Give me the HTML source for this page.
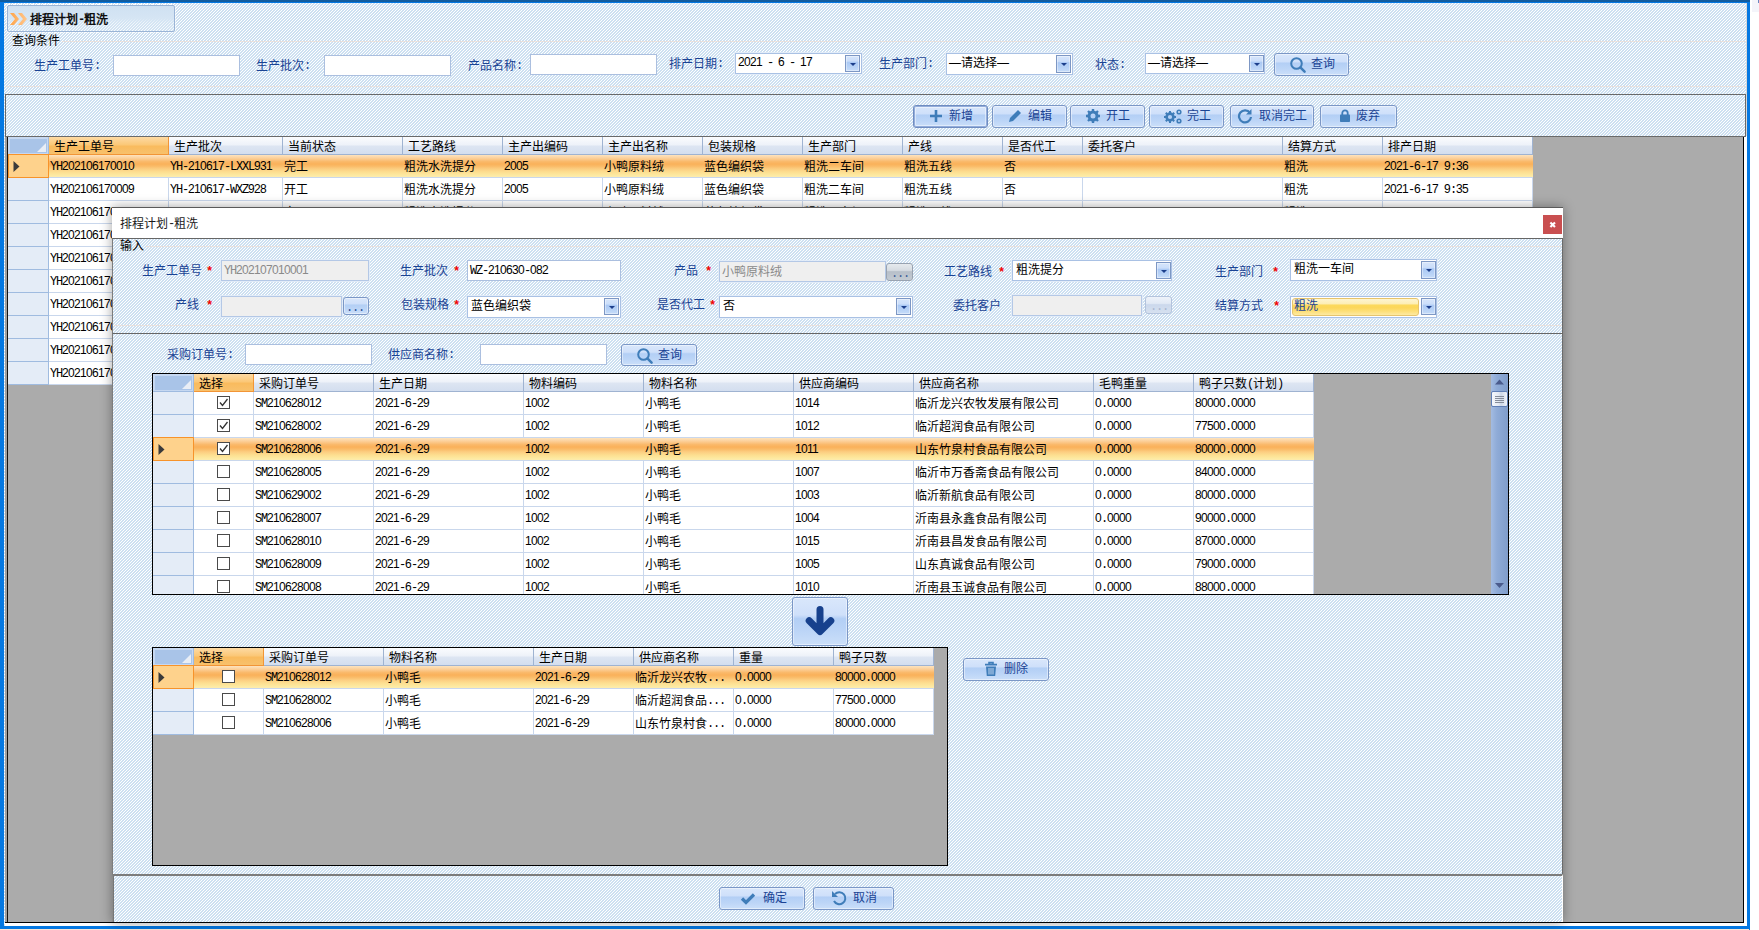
<!DOCTYPE html>
<html lang="zh-CN"><head><meta charset="utf-8"><title>排程计划-粗洗</title><style>
*{box-sizing:border-box;margin:0;padding:0}
html,body{width:1759px;height:930px;overflow:hidden;background:#fff}
body{font-family:"Liberation Sans",sans-serif;font-size:12px;line-height:14px;color:#000;position:relative}
.a{position:absolute}
.t{white-space:nowrap;height:15px;line-height:14px;padding-top:1px}
i.m{font-family:"Liberation Mono",monospace;font-style:normal;letter-spacing:-1.2px;position:relative;top:-1px}
i.d{font-family:"Liberation Sans",sans-serif;font-style:normal;letter-spacing:-.674px;position:relative;top:-1px}
.hatch{background:repeating-linear-gradient(135deg,#fff 0 0.3536px,#cde0f1 0.3536px 1.7678px,#fff 1.7678px 2.1213px)}
.lb{color:#1a4394}
.red{color:#f00000}
.inp{background:#fff;border:1px solid #abbfdf}
.cmb{background:#fff;border:1px solid #a9c1e4;box-shadow:0 0 0 1px rgba(226,236,248,.9)}
.dis{background:#efefef;border:1px solid #b4c8e6;box-shadow:0 0 0 1px rgba(226,236,248,.9)}
.btn{border:1px solid #7b97c6;border-radius:3px;background:linear-gradient(#d9e7fb 0,#cfe0fa 36%,#b3cff5 44%,#bcd5f7 70%,#cbdff9 100%);box-shadow:inset 0 0 0 1px rgba(255,255,255,.45)}
.dd{border:1px solid #7d97c4;background:linear-gradient(#d6e5fb 0,#cbdefa 34%,#abc9f4 42%,#b6d1f6 70%,#c6dcf9 100%);box-shadow:inset 0 0 0 1px rgba(255,255,255,.4)}
.dd:after{content:"";position:absolute;left:50%;top:50%;margin:-1px 0 0 -3px;border:3px solid transparent;border-top:3px solid #1c3f8c;border-bottom:0}
.hd{background:linear-gradient(#fbfcfe 0,#eef2f9 45%,#dde5f2 55%,#d3deef 100%);border-right:1px solid #9fb3d1;border-bottom:1px solid #9fb3d1}
.hdo{background:linear-gradient(#fddaa4 0,#fbc878 45%,#f9bb5e 55%,#f8c16c 100%);border-right:1px solid #f29536;border-bottom:1px solid #f29536}
.ind{background:#e4ecf7;border-right:1px solid #9fbbe0;border-bottom:1px solid #9fbbe0}
.indh{background:#a9c4e8;box-shadow:inset 2px 2px 0 #c6d8f1,inset -1px -1px 0 #c6d8f1;border-right:1px solid #9fbbe0;border-bottom:1px solid #9fbbe0}
.cell{background:#fff;border-right:1px solid #c9d7ec;border-bottom:1px solid #c9d7ec}
.sel{background:linear-gradient(#fde3be 0,#fcd09a 14%,#fab96a 30%,#fab15a 41%,#fabb68 51%,#fccd80 63%,#fdde90 77%,#fde89e 90%,#fdecae 100%)}
.indsel{background:#fed28c;border:1px solid #f7932a}
.cb{background:#fff;border:1px solid #4a4a4a;width:13px;height:13px}
</style></head><body>
<div class="a " style="left:0px;top:0px;width:1750px;height:930px;background:#0478e2"></div>
<div class="a " style="left:0px;top:0px;width:1750px;height:2px;background:#115c9f"></div>
<div class="a " style="left:0px;top:929px;width:1749px;height:1px;background:#fbe6d6"></div>
<div class="a " style="left:1752px;top:0px;width:7px;height:12px;background:#f4f4fa"></div>
<div class="a " style="left:1758px;top:0px;width:1px;height:3px;background:#6a86c0"></div>
<div class="a hatch" style="left:4px;top:3px;width:1743px;height:923px;"></div>
<div class="a " style="left:7px;top:5px;width:168px;height:27px;outline:1px dotted #fff;outline-offset:0;border:1px solid #9ab4d6;border-radius:2px;background:linear-gradient(#cfe1f2 0,#d5e5f4 48%,rgba(222,235,246,.45) 68%,rgba(228,239,248,.2) 100%)"></div>
<svg class="a" style="left:9px;top:12px" width="20" height="14" viewBox="0 0 20 14"><defs><linearGradient id="og" x1="0" y1="0" x2="1" y2="0"><stop offset="0" stop-color="#ffa54a"/><stop offset="1" stop-color="#ffc68c"/></linearGradient></defs><path d="M1 1h4l5 6-5 6h-4l5-6z M9 1h4l5 6-5 6h-4l5-6z" fill="url(#og)"/></svg>
<div class="a t " style="left:30px;top:12px;font-weight:bold;color:#101010">排程计划<i class="m">-</i>粗洗</div>
<div class="a t " style="left:12px;top:33px;">查询条件</div>
<div class="a " style="left:62px;top:41px;width:1684px;height:1px;background:repeating-linear-gradient(90deg,#e9dcd5 0 1px,rgba(238,228,223,.7) 1px 2px)"></div>
<div class="a " style="left:6px;top:86px;width:1740px;height:1px;background:repeating-linear-gradient(90deg,#e9dcd5 0 1px,rgba(238,228,223,.7) 1px 2px)"></div>
<div class="a t lb" style="left:34px;top:58px;">生产工单号<i class="m">:</i></div>
<div class="a inp" style="left:113px;top:55px;width:127px;height:21px;"></div>
<div class="a t lb" style="left:256px;top:58px;">生产批次<i class="m">:</i></div>
<div class="a inp" style="left:324px;top:55px;width:127px;height:21px;"></div>
<div class="a t lb" style="left:468px;top:58px;">产品名称<i class="m">:</i></div>
<div class="a inp" style="left:530px;top:54px;width:127px;height:21px;"></div>
<div class="a t lb" style="left:669px;top:56px;">排产日期<i class="m">:</i></div>
<div class="a cmb" style="left:735px;top:53px;width:127px;height:21px;"></div>
<div class="a t " style="left:738px;top:55px;word-spacing:-1px"><i class="d">2021</i><i class="m"> - </i><i class="d">6</i><i class="m"> - </i><i class="d">17</i></div>
<div class="a dd" style="left:845px;top:55px;width:15px;height:17px;"></div>
<div class="a t lb" style="left:879px;top:56px;">生产部门<i class="m">:</i></div>
<div class="a cmb" style="left:946px;top:53px;width:127px;height:22px;"></div>
<div class="a t " style="left:949px;top:55px;">—请选择—</div>
<div class="a dd" style="left:1056px;top:55px;width:15px;height:18px;"></div>
<div class="a t lb" style="left:1095px;top:57px;">状态<i class="m">:</i></div>
<div class="a cmb" style="left:1145px;top:53px;width:120px;height:21px;"></div>
<div class="a t " style="left:1148px;top:55px;">—请选择—</div>
<div class="a dd" style="left:1249px;top:55px;width:15px;height:17px;"></div>
<div class="a btn" style="left:1274px;top:53px;width:75px;height:23px;"></div>
<svg class="a" style="left:1289px;top:56px" width="18" height="18" viewBox="0 0 18 18"><circle cx="7.5" cy="7.5" r="5.3" fill="none" stroke="#3f7db9" stroke-width="2"/><path d="M11.6 11.6l4 4" stroke="#3f7db9" stroke-width="2.5" stroke-linecap="round"/></svg>
<div class="a t lb" style="left:1311px;top:56px;">查询</div>
<div class="a " style="left:5px;top:94px;width:1741px;height:43px;border:1px solid #696969"></div>
<div class="a " style="left:1746px;top:3px;width:1px;height:134px;background:#d6d8da"></div>
<div class="a btn" style="left:913px;top:105px;width:75px;height:23px;box-shadow:inset 0 0 0 1px #93addb,inset 0 0 0 2px rgba(255,255,255,.45);border-color:#6f8cc0"></div>
<svg class="a" style="left:929px;top:109px" width="14" height="14" viewBox="0 0 14 14"><path d="M7 1v12M1 7h12" stroke="#3f7db9" stroke-width="2.6"/></svg>
<div class="a t lb" style="left:949px;top:108px;">新增</div>
<div class="a btn" style="left:992px;top:105px;width:75px;height:23px;"></div>
<svg class="a" style="left:1007px;top:108px" width="16" height="16" viewBox="0 0 16 16"><path d="M2 14l1-4 8-8 3 3-8 8z" fill="#3f7db9"/></svg>
<div class="a t lb" style="left:1028px;top:108px;">编辑</div>
<div class="a btn" style="left:1070px;top:105px;width:75px;height:23px;"></div>
<svg class="a" style="left:1085px;top:108px" width="16" height="16" viewBox="0 0 16 16"><circle cx="8" cy="8" r="4" fill="none" stroke="#3f7db9" stroke-width="3"/><g stroke="#3f7db9" stroke-width="2.4"><path d="M8 1v3M8 12v3M1 8h3M12 8h3M3 3l2 2M11 11l2 2M13 3l-2 2M5 11l-2 2"/></g></svg>
<div class="a t lb" style="left:1106px;top:108px;">开工</div>
<div class="a btn" style="left:1149px;top:105px;width:75px;height:23px;"></div>
<svg class="a" style="left:1163px;top:108px" width="20" height="16" viewBox="0 0 20 16"><circle cx="7" cy="9" r="3.4" fill="none" stroke="#3f7db9" stroke-width="2.6"/><g stroke="#3f7db9" stroke-width="2"><path d="M7 3v2M7 13v2M1 9h2M11 9h2M2.8 4.8l1.4 1.4M9.8 11.8l1.4 1.4M11.2 4.8l-1.4 1.4M4.2 11.8l-1.4 1.4"/></g><circle cx="16" cy="4" r="1.8" fill="none" stroke="#3f7db9" stroke-width="1.6"/><circle cx="16" cy="13" r="1.8" fill="none" stroke="#3f7db9" stroke-width="1.6"/></svg>
<div class="a t lb" style="left:1187px;top:108px;">完工</div>
<div class="a btn" style="left:1230px;top:105px;width:84px;height:23px;"></div>
<svg class="a" style="left:1237px;top:108px" width="16" height="16" viewBox="0 0 16 16"><path d="M13 5A6 6 0 1 0 14 9" fill="none" stroke="#3f7db9" stroke-width="2.2"/><path d="M14.5 1v5.5h-5.5z" fill="#3f7db9"/></svg>
<div class="a t lb" style="left:1259px;top:108px;">取消完工</div>
<div class="a btn" style="left:1320px;top:105px;width:77px;height:23px;"></div>
<svg class="a" style="left:1338px;top:108px" width="14" height="16" viewBox="0 0 14 16"><rect x="2" y="6.5" width="10" height="7.5" rx=".8" fill="#3f7db9"/><path d="M4.3 7V5a2.7 2.7 0 0 1 5.4 0v2" fill="none" stroke="#3f7db9" stroke-width="1.8"/></svg>
<div class="a t lb" style="left:1356px;top:108px;">废弃</div>
<div class="a " style="left:5px;top:136px;width:1742px;height:790px;background:#fff"></div>
<div class="a " style="left:5px;top:136px;width:1739px;height:787px;background:#000"></div>
<div class="a " style="left:5px;top:136px;width:1738px;height:786px;background:#ababab"></div>
<div class="a " style="left:5px;top:136px;width:1741px;height:1px;background:#696969"></div>
<div class="a " style="left:5px;top:137px;width:2px;height:785px;background:#a0a0a0"></div>
<div class="a " style="left:7px;top:137px;width:1px;height:785px;background:#141414"></div>
<div class="a indh" style="left:8px;top:137px;width:41px;height:18px;"><svg class="a" style="right:2px;bottom:2px" width="9" height="9"><path d="M9 0v9h-9z" fill="#e9eef6"/></svg></div>
<div class="a hdo" style="left:49px;top:137px;width:120px;height:18px;"></div>
<div class="a t " style="left:54px;top:139px;">生产工单号</div>
<div class="a hd" style="left:169px;top:137px;width:114px;height:18px;"></div>
<div class="a t " style="left:174px;top:139px;">生产批次</div>
<div class="a hd" style="left:283px;top:137px;width:120px;height:18px;"></div>
<div class="a t " style="left:288px;top:139px;">当前状态</div>
<div class="a hd" style="left:403px;top:137px;width:100px;height:18px;"></div>
<div class="a t " style="left:408px;top:139px;">工艺路线</div>
<div class="a hd" style="left:503px;top:137px;width:100px;height:18px;"></div>
<div class="a t " style="left:508px;top:139px;">主产出编码</div>
<div class="a hd" style="left:603px;top:137px;width:100px;height:18px;"></div>
<div class="a t " style="left:608px;top:139px;">主产出名称</div>
<div class="a hd" style="left:703px;top:137px;width:100px;height:18px;"></div>
<div class="a t " style="left:708px;top:139px;">包装规格</div>
<div class="a hd" style="left:803px;top:137px;width:100px;height:18px;"></div>
<div class="a t " style="left:808px;top:139px;">生产部门</div>
<div class="a hd" style="left:903px;top:137px;width:100px;height:18px;"></div>
<div class="a t " style="left:908px;top:139px;">产线</div>
<div class="a hd" style="left:1003px;top:137px;width:80px;height:18px;"></div>
<div class="a t " style="left:1008px;top:139px;">是否代工</div>
<div class="a hd" style="left:1083px;top:137px;width:200px;height:18px;"></div>
<div class="a t " style="left:1088px;top:139px;">委托客户</div>
<div class="a hd" style="left:1283px;top:137px;width:100px;height:18px;"></div>
<div class="a t " style="left:1288px;top:139px;">结算方式</div>
<div class="a hd" style="left:1383px;top:137px;width:150px;height:18px;"></div>
<div class="a t " style="left:1388px;top:139px;">排产日期</div>
<div class="a indsel" style="left:8px;top:154px;width:41px;height:24px;"><svg class="a" style="left:4px;top:6px" width="7" height="11"><path d="M0.5 0l6 5.5-6 5.5z" fill="#3a3a3a"/></svg></div>
<div class="a sel" style="left:49px;top:155px;width:1484px;height:23px;border-bottom:1px solid #c9d7ec"></div>
<div class="a t " style="left:50px;top:159px;"><i class="m">YH</i><i class="d">202106170010</i></div>
<div class="a t " style="left:170px;top:159px;"><i class="m">YH-</i><i class="d">210617</i><i class="m">-LXXL</i><i class="d">931</i></div>
<div class="a t " style="left:284px;top:159px;">完工</div>
<div class="a t " style="left:404px;top:159px;">粗洗水洗提分</div>
<div class="a t " style="left:504px;top:159px;"><i class="d">2005</i></div>
<div class="a t " style="left:604px;top:159px;">小鸭原料绒</div>
<div class="a t " style="left:704px;top:159px;">蓝色编织袋</div>
<div class="a t " style="left:804px;top:159px;">粗洗二车间</div>
<div class="a t " style="left:904px;top:159px;">粗洗五线</div>
<div class="a t " style="left:1004px;top:159px;">否</div>
<div class="a t " style="left:1284px;top:159px;">粗洗</div>
<div class="a t " style="left:1384px;top:159px;"><i class="d">2021</i><i class="m">-</i><i class="d">6</i><i class="m">-</i><i class="d">17</i><i class="m"> </i><i class="d">9</i><i class="m">:</i><i class="d">36</i></div>
<div class="a ind" style="left:8px;top:178px;width:41px;height:23px;"></div>
<div class="a cell" style="left:49px;top:178px;width:120px;height:23px;"></div>
<div class="a t " style="left:50px;top:182px;"><i class="m">YH</i><i class="d">202106170009</i></div>
<div class="a cell" style="left:169px;top:178px;width:114px;height:23px;"></div>
<div class="a t " style="left:170px;top:182px;"><i class="m">YH-</i><i class="d">210617</i><i class="m">-WXZ</i><i class="d">928</i></div>
<div class="a cell" style="left:283px;top:178px;width:120px;height:23px;"></div>
<div class="a t " style="left:284px;top:182px;">开工</div>
<div class="a cell" style="left:403px;top:178px;width:100px;height:23px;"></div>
<div class="a t " style="left:404px;top:182px;">粗洗水洗提分</div>
<div class="a cell" style="left:503px;top:178px;width:100px;height:23px;"></div>
<div class="a t " style="left:504px;top:182px;"><i class="d">2005</i></div>
<div class="a cell" style="left:603px;top:178px;width:100px;height:23px;"></div>
<div class="a t " style="left:604px;top:182px;">小鸭原料绒</div>
<div class="a cell" style="left:703px;top:178px;width:100px;height:23px;"></div>
<div class="a t " style="left:704px;top:182px;">蓝色编织袋</div>
<div class="a cell" style="left:803px;top:178px;width:100px;height:23px;"></div>
<div class="a t " style="left:804px;top:182px;">粗洗二车间</div>
<div class="a cell" style="left:903px;top:178px;width:100px;height:23px;"></div>
<div class="a t " style="left:904px;top:182px;">粗洗五线</div>
<div class="a cell" style="left:1003px;top:178px;width:80px;height:23px;"></div>
<div class="a t " style="left:1004px;top:182px;">否</div>
<div class="a cell" style="left:1083px;top:178px;width:200px;height:23px;"></div>
<div class="a cell" style="left:1283px;top:178px;width:100px;height:23px;"></div>
<div class="a t " style="left:1284px;top:182px;">粗洗</div>
<div class="a cell" style="left:1383px;top:178px;width:150px;height:23px;"></div>
<div class="a t " style="left:1384px;top:182px;"><i class="d">2021</i><i class="m">-</i><i class="d">6</i><i class="m">-</i><i class="d">17</i><i class="m"> </i><i class="d">9</i><i class="m">:</i><i class="d">35</i></div>
<div class="a ind" style="left:8px;top:201px;width:41px;height:23px;"></div>
<div class="a cell" style="left:49px;top:201px;width:120px;height:23px;"></div>
<div class="a t " style="left:50px;top:205px;"><i class="m">YH</i><i class="d">202106170008</i></div>
<div class="a cell" style="left:169px;top:201px;width:114px;height:23px;"></div>
<div class="a t " style="left:170px;top:205px;"><i class="m">YH-</i><i class="d">210617</i><i class="m">-WXZ</i><i class="d">927</i></div>
<div class="a cell" style="left:283px;top:201px;width:120px;height:23px;"></div>
<div class="a t " style="left:284px;top:205px;">完工</div>
<div class="a cell" style="left:403px;top:201px;width:100px;height:23px;"></div>
<div class="a t " style="left:404px;top:205px;">粗洗水洗提分</div>
<div class="a cell" style="left:503px;top:201px;width:100px;height:23px;"></div>
<div class="a t " style="left:504px;top:205px;"><i class="d">2005</i></div>
<div class="a cell" style="left:603px;top:201px;width:100px;height:23px;"></div>
<div class="a t " style="left:604px;top:205px;">小鸭原料绒</div>
<div class="a cell" style="left:703px;top:201px;width:100px;height:23px;"></div>
<div class="a t " style="left:704px;top:205px;">蓝色编织袋</div>
<div class="a cell" style="left:803px;top:201px;width:100px;height:23px;"></div>
<div class="a t " style="left:804px;top:205px;">粗洗二车间</div>
<div class="a cell" style="left:903px;top:201px;width:100px;height:23px;"></div>
<div class="a t " style="left:904px;top:205px;">粗洗五线</div>
<div class="a cell" style="left:1003px;top:201px;width:80px;height:23px;"></div>
<div class="a t " style="left:1004px;top:205px;">否</div>
<div class="a cell" style="left:1083px;top:201px;width:200px;height:23px;"></div>
<div class="a cell" style="left:1283px;top:201px;width:100px;height:23px;"></div>
<div class="a t " style="left:1284px;top:205px;">粗洗</div>
<div class="a cell" style="left:1383px;top:201px;width:150px;height:23px;"></div>
<div class="a t " style="left:1384px;top:205px;"><i class="d">2021</i><i class="m">-</i><i class="d">6</i><i class="m">-</i><i class="d">17</i><i class="m"> </i><i class="d">9</i><i class="m">:</i><i class="d">30</i></div>
<div class="a ind" style="left:8px;top:224px;width:41px;height:23px;"></div>
<div class="a cell" style="left:49px;top:224px;width:120px;height:23px;"></div>
<div class="a t " style="left:50px;top:228px;"><i class="m">YH</i><i class="d">202106170007</i></div>
<div class="a cell" style="left:169px;top:224px;width:114px;height:23px;"></div>
<div class="a t " style="left:170px;top:228px;"><i class="m">YH-</i><i class="d">210617</i><i class="m">-WXZ</i><i class="d">926</i></div>
<div class="a cell" style="left:283px;top:224px;width:120px;height:23px;"></div>
<div class="a t " style="left:284px;top:228px;">完工</div>
<div class="a cell" style="left:403px;top:224px;width:100px;height:23px;"></div>
<div class="a t " style="left:404px;top:228px;">粗洗水洗提分</div>
<div class="a cell" style="left:503px;top:224px;width:100px;height:23px;"></div>
<div class="a t " style="left:504px;top:228px;"><i class="d">2005</i></div>
<div class="a cell" style="left:603px;top:224px;width:100px;height:23px;"></div>
<div class="a t " style="left:604px;top:228px;">小鸭原料绒</div>
<div class="a cell" style="left:703px;top:224px;width:100px;height:23px;"></div>
<div class="a t " style="left:704px;top:228px;">蓝色编织袋</div>
<div class="a cell" style="left:803px;top:224px;width:100px;height:23px;"></div>
<div class="a t " style="left:804px;top:228px;">粗洗二车间</div>
<div class="a cell" style="left:903px;top:224px;width:100px;height:23px;"></div>
<div class="a t " style="left:904px;top:228px;">粗洗五线</div>
<div class="a cell" style="left:1003px;top:224px;width:80px;height:23px;"></div>
<div class="a t " style="left:1004px;top:228px;">否</div>
<div class="a cell" style="left:1083px;top:224px;width:200px;height:23px;"></div>
<div class="a cell" style="left:1283px;top:224px;width:100px;height:23px;"></div>
<div class="a t " style="left:1284px;top:228px;">粗洗</div>
<div class="a cell" style="left:1383px;top:224px;width:150px;height:23px;"></div>
<div class="a t " style="left:1384px;top:228px;"><i class="d">2021</i><i class="m">-</i><i class="d">6</i><i class="m">-</i><i class="d">17</i><i class="m"> </i><i class="d">9</i><i class="m">:</i><i class="d">28</i></div>
<div class="a ind" style="left:8px;top:247px;width:41px;height:23px;"></div>
<div class="a cell" style="left:49px;top:247px;width:120px;height:23px;"></div>
<div class="a t " style="left:50px;top:251px;"><i class="m">YH</i><i class="d">202106170006</i></div>
<div class="a cell" style="left:169px;top:247px;width:114px;height:23px;"></div>
<div class="a t " style="left:170px;top:251px;"><i class="m">YH-</i><i class="d">210617</i><i class="m">-WXZ</i><i class="d">925</i></div>
<div class="a cell" style="left:283px;top:247px;width:120px;height:23px;"></div>
<div class="a t " style="left:284px;top:251px;">完工</div>
<div class="a cell" style="left:403px;top:247px;width:100px;height:23px;"></div>
<div class="a t " style="left:404px;top:251px;">粗洗水洗提分</div>
<div class="a cell" style="left:503px;top:247px;width:100px;height:23px;"></div>
<div class="a t " style="left:504px;top:251px;"><i class="d">2005</i></div>
<div class="a cell" style="left:603px;top:247px;width:100px;height:23px;"></div>
<div class="a t " style="left:604px;top:251px;">小鸭原料绒</div>
<div class="a cell" style="left:703px;top:247px;width:100px;height:23px;"></div>
<div class="a t " style="left:704px;top:251px;">蓝色编织袋</div>
<div class="a cell" style="left:803px;top:247px;width:100px;height:23px;"></div>
<div class="a t " style="left:804px;top:251px;">粗洗二车间</div>
<div class="a cell" style="left:903px;top:247px;width:100px;height:23px;"></div>
<div class="a t " style="left:904px;top:251px;">粗洗五线</div>
<div class="a cell" style="left:1003px;top:247px;width:80px;height:23px;"></div>
<div class="a t " style="left:1004px;top:251px;">否</div>
<div class="a cell" style="left:1083px;top:247px;width:200px;height:23px;"></div>
<div class="a cell" style="left:1283px;top:247px;width:100px;height:23px;"></div>
<div class="a t " style="left:1284px;top:251px;">粗洗</div>
<div class="a cell" style="left:1383px;top:247px;width:150px;height:23px;"></div>
<div class="a t " style="left:1384px;top:251px;"><i class="d">2021</i><i class="m">-</i><i class="d">6</i><i class="m">-</i><i class="d">17</i><i class="m"> </i><i class="d">9</i><i class="m">:</i><i class="d">25</i></div>
<div class="a ind" style="left:8px;top:270px;width:41px;height:23px;"></div>
<div class="a cell" style="left:49px;top:270px;width:120px;height:23px;"></div>
<div class="a t " style="left:50px;top:274px;"><i class="m">YH</i><i class="d">202106170005</i></div>
<div class="a cell" style="left:169px;top:270px;width:114px;height:23px;"></div>
<div class="a t " style="left:170px;top:274px;"><i class="m">YH-</i><i class="d">210617</i><i class="m">-WXZ</i><i class="d">924</i></div>
<div class="a cell" style="left:283px;top:270px;width:120px;height:23px;"></div>
<div class="a t " style="left:284px;top:274px;">完工</div>
<div class="a cell" style="left:403px;top:270px;width:100px;height:23px;"></div>
<div class="a t " style="left:404px;top:274px;">粗洗水洗提分</div>
<div class="a cell" style="left:503px;top:270px;width:100px;height:23px;"></div>
<div class="a t " style="left:504px;top:274px;"><i class="d">2005</i></div>
<div class="a cell" style="left:603px;top:270px;width:100px;height:23px;"></div>
<div class="a t " style="left:604px;top:274px;">小鸭原料绒</div>
<div class="a cell" style="left:703px;top:270px;width:100px;height:23px;"></div>
<div class="a t " style="left:704px;top:274px;">蓝色编织袋</div>
<div class="a cell" style="left:803px;top:270px;width:100px;height:23px;"></div>
<div class="a t " style="left:804px;top:274px;">粗洗二车间</div>
<div class="a cell" style="left:903px;top:270px;width:100px;height:23px;"></div>
<div class="a t " style="left:904px;top:274px;">粗洗五线</div>
<div class="a cell" style="left:1003px;top:270px;width:80px;height:23px;"></div>
<div class="a t " style="left:1004px;top:274px;">否</div>
<div class="a cell" style="left:1083px;top:270px;width:200px;height:23px;"></div>
<div class="a cell" style="left:1283px;top:270px;width:100px;height:23px;"></div>
<div class="a t " style="left:1284px;top:274px;">粗洗</div>
<div class="a cell" style="left:1383px;top:270px;width:150px;height:23px;"></div>
<div class="a t " style="left:1384px;top:274px;"><i class="d">2021</i><i class="m">-</i><i class="d">6</i><i class="m">-</i><i class="d">17</i><i class="m"> </i><i class="d">9</i><i class="m">:</i><i class="d">20</i></div>
<div class="a ind" style="left:8px;top:293px;width:41px;height:23px;"></div>
<div class="a cell" style="left:49px;top:293px;width:120px;height:23px;"></div>
<div class="a t " style="left:50px;top:297px;"><i class="m">YH</i><i class="d">202106170004</i></div>
<div class="a cell" style="left:169px;top:293px;width:114px;height:23px;"></div>
<div class="a t " style="left:170px;top:297px;"><i class="m">YH-</i><i class="d">210617</i><i class="m">-WXZ</i><i class="d">923</i></div>
<div class="a cell" style="left:283px;top:293px;width:120px;height:23px;"></div>
<div class="a t " style="left:284px;top:297px;">完工</div>
<div class="a cell" style="left:403px;top:293px;width:100px;height:23px;"></div>
<div class="a t " style="left:404px;top:297px;">粗洗水洗提分</div>
<div class="a cell" style="left:503px;top:293px;width:100px;height:23px;"></div>
<div class="a t " style="left:504px;top:297px;"><i class="d">2005</i></div>
<div class="a cell" style="left:603px;top:293px;width:100px;height:23px;"></div>
<div class="a t " style="left:604px;top:297px;">小鸭原料绒</div>
<div class="a cell" style="left:703px;top:293px;width:100px;height:23px;"></div>
<div class="a t " style="left:704px;top:297px;">蓝色编织袋</div>
<div class="a cell" style="left:803px;top:293px;width:100px;height:23px;"></div>
<div class="a t " style="left:804px;top:297px;">粗洗二车间</div>
<div class="a cell" style="left:903px;top:293px;width:100px;height:23px;"></div>
<div class="a t " style="left:904px;top:297px;">粗洗五线</div>
<div class="a cell" style="left:1003px;top:293px;width:80px;height:23px;"></div>
<div class="a t " style="left:1004px;top:297px;">否</div>
<div class="a cell" style="left:1083px;top:293px;width:200px;height:23px;"></div>
<div class="a cell" style="left:1283px;top:293px;width:100px;height:23px;"></div>
<div class="a t " style="left:1284px;top:297px;">粗洗</div>
<div class="a cell" style="left:1383px;top:293px;width:150px;height:23px;"></div>
<div class="a t " style="left:1384px;top:297px;"><i class="d">2021</i><i class="m">-</i><i class="d">6</i><i class="m">-</i><i class="d">17</i><i class="m"> </i><i class="d">9</i><i class="m">:</i><i class="d">15</i></div>
<div class="a ind" style="left:8px;top:316px;width:41px;height:23px;"></div>
<div class="a cell" style="left:49px;top:316px;width:120px;height:23px;"></div>
<div class="a t " style="left:50px;top:320px;"><i class="m">YH</i><i class="d">202106170003</i></div>
<div class="a cell" style="left:169px;top:316px;width:114px;height:23px;"></div>
<div class="a t " style="left:170px;top:320px;"><i class="m">YH-</i><i class="d">210617</i><i class="m">-WXZ</i><i class="d">922</i></div>
<div class="a cell" style="left:283px;top:316px;width:120px;height:23px;"></div>
<div class="a t " style="left:284px;top:320px;">完工</div>
<div class="a cell" style="left:403px;top:316px;width:100px;height:23px;"></div>
<div class="a t " style="left:404px;top:320px;">粗洗水洗提分</div>
<div class="a cell" style="left:503px;top:316px;width:100px;height:23px;"></div>
<div class="a t " style="left:504px;top:320px;"><i class="d">2005</i></div>
<div class="a cell" style="left:603px;top:316px;width:100px;height:23px;"></div>
<div class="a t " style="left:604px;top:320px;">小鸭原料绒</div>
<div class="a cell" style="left:703px;top:316px;width:100px;height:23px;"></div>
<div class="a t " style="left:704px;top:320px;">蓝色编织袋</div>
<div class="a cell" style="left:803px;top:316px;width:100px;height:23px;"></div>
<div class="a t " style="left:804px;top:320px;">粗洗二车间</div>
<div class="a cell" style="left:903px;top:316px;width:100px;height:23px;"></div>
<div class="a t " style="left:904px;top:320px;">粗洗五线</div>
<div class="a cell" style="left:1003px;top:316px;width:80px;height:23px;"></div>
<div class="a t " style="left:1004px;top:320px;">否</div>
<div class="a cell" style="left:1083px;top:316px;width:200px;height:23px;"></div>
<div class="a cell" style="left:1283px;top:316px;width:100px;height:23px;"></div>
<div class="a t " style="left:1284px;top:320px;">粗洗</div>
<div class="a cell" style="left:1383px;top:316px;width:150px;height:23px;"></div>
<div class="a t " style="left:1384px;top:320px;"><i class="d">2021</i><i class="m">-</i><i class="d">6</i><i class="m">-</i><i class="d">17</i><i class="m"> </i><i class="d">9</i><i class="m">:</i><i class="d">10</i></div>
<div class="a ind" style="left:8px;top:339px;width:41px;height:23px;"></div>
<div class="a cell" style="left:49px;top:339px;width:120px;height:23px;"></div>
<div class="a t " style="left:50px;top:343px;"><i class="m">YH</i><i class="d">202106170002</i></div>
<div class="a cell" style="left:169px;top:339px;width:114px;height:23px;"></div>
<div class="a t " style="left:170px;top:343px;"><i class="m">YH-</i><i class="d">210617</i><i class="m">-WXZ</i><i class="d">921</i></div>
<div class="a cell" style="left:283px;top:339px;width:120px;height:23px;"></div>
<div class="a t " style="left:284px;top:343px;">完工</div>
<div class="a cell" style="left:403px;top:339px;width:100px;height:23px;"></div>
<div class="a t " style="left:404px;top:343px;">粗洗水洗提分</div>
<div class="a cell" style="left:503px;top:339px;width:100px;height:23px;"></div>
<div class="a t " style="left:504px;top:343px;"><i class="d">2005</i></div>
<div class="a cell" style="left:603px;top:339px;width:100px;height:23px;"></div>
<div class="a t " style="left:604px;top:343px;">小鸭原料绒</div>
<div class="a cell" style="left:703px;top:339px;width:100px;height:23px;"></div>
<div class="a t " style="left:704px;top:343px;">蓝色编织袋</div>
<div class="a cell" style="left:803px;top:339px;width:100px;height:23px;"></div>
<div class="a t " style="left:804px;top:343px;">粗洗二车间</div>
<div class="a cell" style="left:903px;top:339px;width:100px;height:23px;"></div>
<div class="a t " style="left:904px;top:343px;">粗洗五线</div>
<div class="a cell" style="left:1003px;top:339px;width:80px;height:23px;"></div>
<div class="a t " style="left:1004px;top:343px;">否</div>
<div class="a cell" style="left:1083px;top:339px;width:200px;height:23px;"></div>
<div class="a cell" style="left:1283px;top:339px;width:100px;height:23px;"></div>
<div class="a t " style="left:1284px;top:343px;">粗洗</div>
<div class="a cell" style="left:1383px;top:339px;width:150px;height:23px;"></div>
<div class="a t " style="left:1384px;top:343px;"><i class="d">2021</i><i class="m">-</i><i class="d">6</i><i class="m">-</i><i class="d">17</i><i class="m"> </i><i class="d">9</i><i class="m">:</i><i class="d">05</i></div>
<div class="a ind" style="left:8px;top:362px;width:41px;height:23px;"></div>
<div class="a cell" style="left:49px;top:362px;width:120px;height:23px;"></div>
<div class="a t " style="left:50px;top:366px;"><i class="m">YH</i><i class="d">202106170001</i></div>
<div class="a cell" style="left:169px;top:362px;width:114px;height:23px;"></div>
<div class="a t " style="left:170px;top:366px;"><i class="m">YH-</i><i class="d">210617</i><i class="m">-WXZ</i><i class="d">920</i></div>
<div class="a cell" style="left:283px;top:362px;width:120px;height:23px;"></div>
<div class="a t " style="left:284px;top:366px;">完工</div>
<div class="a cell" style="left:403px;top:362px;width:100px;height:23px;"></div>
<div class="a t " style="left:404px;top:366px;">粗洗水洗提分</div>
<div class="a cell" style="left:503px;top:362px;width:100px;height:23px;"></div>
<div class="a t " style="left:504px;top:366px;"><i class="d">2005</i></div>
<div class="a cell" style="left:603px;top:362px;width:100px;height:23px;"></div>
<div class="a t " style="left:604px;top:366px;">小鸭原料绒</div>
<div class="a cell" style="left:703px;top:362px;width:100px;height:23px;"></div>
<div class="a t " style="left:704px;top:366px;">蓝色编织袋</div>
<div class="a cell" style="left:803px;top:362px;width:100px;height:23px;"></div>
<div class="a t " style="left:804px;top:366px;">粗洗二车间</div>
<div class="a cell" style="left:903px;top:362px;width:100px;height:23px;"></div>
<div class="a t " style="left:904px;top:366px;">粗洗五线</div>
<div class="a cell" style="left:1003px;top:362px;width:80px;height:23px;"></div>
<div class="a t " style="left:1004px;top:366px;">否</div>
<div class="a cell" style="left:1083px;top:362px;width:200px;height:23px;"></div>
<div class="a cell" style="left:1283px;top:362px;width:100px;height:23px;"></div>
<div class="a t " style="left:1284px;top:366px;">粗洗</div>
<div class="a cell" style="left:1383px;top:362px;width:150px;height:23px;"></div>
<div class="a t " style="left:1384px;top:366px;"><i class="d">2021</i><i class="m">-</i><i class="d">6</i><i class="m">-</i><i class="d">17</i><i class="m"> </i><i class="d">9</i><i class="m">:</i><i class="d">00</i></div>
<div class="a " style="left:112px;top:207px;width:1451px;height:716px;background:#fff;box-shadow:0 0 11px rgba(0,0,0,.36)"></div>
<div class="a " style="left:112px;top:207px;width:1451px;height:1px;background:#5a5a5a"></div>
<div class="a " style="left:112px;top:922px;width:1451px;height:1px;background:#000"></div>
<div class="a t " style="left:120px;top:216px;color:#1a1a1a">排程计划<i class="m">-</i>粗洗</div>
<div class="a " style="left:1543px;top:215px;width:19px;height:19px;background:#c94f50"></div>
<svg class="a" style="left:1549px;top:221px" width="8" height="8"><path d="M1.4 1.4l4.6 4.6M6 1.4l-4.6 4.6" stroke="#fff" stroke-width="2.1"/></svg>
<div class="a hatch" style="left:112px;top:238px;width:1451px;height:95px;border-top:1px solid #666;border-left:1px solid #7d7d7d;border-right:1px solid #6b6b6b;"></div>
<div class="a t " style="left:120px;top:238px;">输入</div>
<div class="a " style="left:146px;top:246px;width:1416px;height:1px;background:repeating-linear-gradient(90deg,#e9dcd5 0 1px,rgba(238,228,223,.7) 1px 2px)"></div>
<div class="a " style="left:114px;top:325px;width:1448px;height:1px;background:repeating-linear-gradient(90deg,#e9dcd5 0 1px,rgba(238,228,223,.7) 1px 2px)"></div>
<div class="a t lb" style="left:142px;top:263px;">生产工单号</div>
<div class="a t red" style="left:206px;top:264px;font-weight:bold"><i class="m">*</i></div>
<div class="a dis" style="left:221px;top:260px;width:148px;height:21px;"></div>
<div class="a t " style="left:224px;top:263px;color:#8a8a8a"><i class="m">YH</i><i class="d">202107010001</i></div>
<div class="a t lb" style="left:400px;top:263px;">生产批次</div>
<div class="a t red" style="left:453px;top:264px;font-weight:bold"><i class="m">*</i></div>
<div class="a inp" style="left:467px;top:260px;width:154px;height:21px;"></div>
<div class="a t " style="left:470px;top:263px;"><i class="m">WZ-</i><i class="d">210630</i><i class="m">-</i><i class="d">082</i></div>
<div class="a t lb" style="left:674px;top:263px;">产品</div>
<div class="a t red" style="left:705px;top:264px;font-weight:bold"><i class="m">*</i></div>
<div class="a dis" style="left:719px;top:261px;width:167px;height:21px;"></div>
<div class="a t " style="left:722px;top:264px;color:#8a8a8a">小鸭原料绒</div>
<div class="a " style="left:886px;top:263px;width:27px;height:18px;border:1px solid #98a2b0;border-radius:3px;background:linear-gradient(#e6eaee 0,#d6dbe1 40%,#b7bfc9 48%,#c3cad2 100%)"></div>
<div class="a t " style="left:891px;top:266px;color:#3b5a96"><i class="m">...</i></div>
<div class="a t lb" style="left:944px;top:264px;">工艺路线</div>
<div class="a t red" style="left:998px;top:265px;font-weight:bold"><i class="m">*</i></div>
<div class="a cmb" style="left:1012px;top:260px;width:160px;height:21px;"></div>
<div class="a t " style="left:1016px;top:262px;">粗洗提分</div>
<div class="a dd" style="left:1156px;top:262px;width:15px;height:17px;"></div>
<div class="a t lb" style="left:1215px;top:264px;">生产部门</div>
<div class="a t red" style="left:1272px;top:265px;font-weight:bold"><i class="m">*</i></div>
<div class="a cmb" style="left:1290px;top:259px;width:147px;height:22px;"></div>
<div class="a t " style="left:1294px;top:261px;">粗洗一车间</div>
<div class="a dd" style="left:1421px;top:261px;width:15px;height:18px;"></div>
<div class="a t lb" style="left:175px;top:297px;">产线</div>
<div class="a t red" style="left:206px;top:298px;font-weight:bold"><i class="m">*</i></div>
<div class="a dis" style="left:221px;top:296px;width:121px;height:21px;"></div>
<div class="a btn" style="left:343px;top:297px;width:26px;height:18px;"></div>
<div class="a t " style="left:346px;top:300px;color:#2c4f94"><i class="m">...</i></div>
<div class="a t lb" style="left:401px;top:297px;">包装规格</div>
<div class="a t red" style="left:453px;top:298px;font-weight:bold"><i class="m">*</i></div>
<div class="a cmb" style="left:467px;top:296px;width:154px;height:22px;"></div>
<div class="a t " style="left:471px;top:298px;">蓝色编织袋</div>
<div class="a dd" style="left:604px;top:298px;width:15px;height:17px;"></div>
<div class="a t lb" style="left:657px;top:297px;">是否代工</div>
<div class="a t red" style="left:709px;top:298px;font-weight:bold"><i class="m">*</i></div>
<div class="a cmb" style="left:719px;top:296px;width:194px;height:22px;"></div>
<div class="a t " style="left:723px;top:298px;">否</div>
<div class="a dd" style="left:896px;top:298px;width:15px;height:17px;"></div>
<div class="a t lb" style="left:953px;top:298px;">委托客户</div>
<div class="a dis" style="left:1012px;top:295px;width:130px;height:21px;"></div>
<div class="a " style="left:1145px;top:296px;width:27px;height:18px;border:1px solid #b3c3dc;border-radius:3px;background:linear-gradient(#eef3fa 0,#e1e9f5 40%,#cbd8ec 48%,#d6e1f0 100%)"></div>
<div class="a t " style="left:1150px;top:299px;color:#a9b7cf"><i class="m">...</i></div>
<div class="a t lb" style="left:1215px;top:298px;">结算方式</div>
<div class="a t red" style="left:1273px;top:299px;font-weight:bold"><i class="m">*</i></div>
<div class="a cmb" style="left:1290px;top:296px;width:147px;height:22px;"></div>
<div class="a " style="left:1292px;top:298px;width:127px;height:18px;border:1px solid #e6c46c;border-radius:3px;background:linear-gradient(#fef5d0 0,#fdeeb4 30%,#fcd95c 38%,#fcd75a 55%,#fde07e 80%,#fdeaa2 100%)"></div>
<div class="a t lb" style="left:1294px;top:298px;">粗洗</div>
<div class="a dd" style="left:1421px;top:298px;width:15px;height:17px;"></div>
<div class="a hatch" style="left:112px;top:333px;width:1451px;height:541px;border-top:1px solid #666;border-left:1px solid #7d7d7d;border-right:1px solid #6b6b6b;"></div>
<div class="a t lb" style="left:167px;top:347px;">采购订单号<i class="m">:</i></div>
<div class="a inp" style="left:245px;top:344px;width:127px;height:21px;"></div>
<div class="a t lb" style="left:388px;top:347px;">供应商名称<i class="m">:</i></div>
<div class="a inp" style="left:480px;top:344px;width:127px;height:21px;"></div>
<div class="a btn" style="left:621px;top:344px;width:76px;height:22px;"></div>
<svg class="a" style="left:636px;top:347px" width="18" height="18" viewBox="0 0 18 18"><circle cx="7.5" cy="7.5" r="5.3" fill="none" stroke="#3f7db9" stroke-width="2"/><path d="M11.6 11.6l4 4" stroke="#3f7db9" stroke-width="2.5" stroke-linecap="round"/></svg>
<div class="a t lb" style="left:658px;top:347px;">查询</div>
<div class="a " style="left:152px;top:373px;width:1357px;height:222px;background:#ababab;border:1px solid #000"></div>
<div class="a" style="left:153px;top:374px;width:1161px;height:220px;overflow:hidden">
<div class="a indh" style="left:0px;top:0px;width:41px;height:18px;"><svg class="a" style="right:2px;bottom:2px" width="9" height="9"><path d="M9 0v9h-9z" fill="#e9eef6"/></svg></div>
<div class="a hdo" style="left:41px;top:0px;width:60px;height:18px;"></div>
<div class="a t " style="left:46px;top:2px;">选择</div>
<div class="a hd" style="left:101px;top:0px;width:120px;height:18px;"></div>
<div class="a t " style="left:106px;top:2px;">采购订单号</div>
<div class="a hd" style="left:221px;top:0px;width:150px;height:18px;"></div>
<div class="a t " style="left:226px;top:2px;">生产日期</div>
<div class="a hd" style="left:371px;top:0px;width:120px;height:18px;"></div>
<div class="a t " style="left:376px;top:2px;">物料编码</div>
<div class="a hd" style="left:491px;top:0px;width:150px;height:18px;"></div>
<div class="a t " style="left:496px;top:2px;">物料名称</div>
<div class="a hd" style="left:641px;top:0px;width:120px;height:18px;"></div>
<div class="a t " style="left:646px;top:2px;">供应商编码</div>
<div class="a hd" style="left:761px;top:0px;width:180px;height:18px;"></div>
<div class="a t " style="left:766px;top:2px;">供应商名称</div>
<div class="a hd" style="left:941px;top:0px;width:100px;height:18px;"></div>
<div class="a t " style="left:946px;top:2px;">毛鸭重量</div>
<div class="a hd" style="left:1041px;top:0px;width:120px;height:18px;"></div>
<div class="a t " style="left:1046px;top:2px;">鸭子只数<i class="m">(</i>计划<i class="m">)</i></div>
<div class="a ind" style="left:0px;top:18px;width:41px;height:23px;"></div>
<div class="a cell" style="left:41px;top:18px;width:60px;height:23px;"></div>
<div class="a cb" style="left:64px;top:22px;width:13px;height:13px;"><svg class="a" style="left:1px;top:1px" width="9" height="9"><path d="M1 4.5l2.5 3L8.5 1" fill="none" stroke="#333" stroke-width="1.3"/></svg></div>
<div class="a cell" style="left:101px;top:18px;width:120px;height:23px;"></div>
<div class="a t " style="left:102px;top:22px;"><i class="m">SM</i><i class="d">210628012</i></div>
<div class="a cell" style="left:221px;top:18px;width:150px;height:23px;"></div>
<div class="a t " style="left:222px;top:22px;"><i class="d">2021</i><i class="m">-</i><i class="d">6</i><i class="m">-</i><i class="d">29</i></div>
<div class="a cell" style="left:371px;top:18px;width:120px;height:23px;"></div>
<div class="a t " style="left:372px;top:22px;"><i class="d">1002</i></div>
<div class="a cell" style="left:491px;top:18px;width:150px;height:23px;"></div>
<div class="a t " style="left:492px;top:22px;">小鸭毛</div>
<div class="a cell" style="left:641px;top:18px;width:120px;height:23px;"></div>
<div class="a t " style="left:642px;top:22px;"><i class="d">1014</i></div>
<div class="a cell" style="left:761px;top:18px;width:180px;height:23px;"></div>
<div class="a t " style="left:762px;top:22px;">临沂龙兴农牧发展有限公司</div>
<div class="a cell" style="left:941px;top:18px;width:100px;height:23px;"></div>
<div class="a t " style="left:942px;top:22px;"><i class="d">0</i><i class="m">.</i><i class="d">0000</i></div>
<div class="a cell" style="left:1041px;top:18px;width:120px;height:23px;"></div>
<div class="a t " style="left:1042px;top:22px;"><i class="d">80000</i><i class="m">.</i><i class="d">0000</i></div>
<div class="a ind" style="left:0px;top:41px;width:41px;height:23px;"></div>
<div class="a cell" style="left:41px;top:41px;width:60px;height:23px;"></div>
<div class="a cb" style="left:64px;top:45px;width:13px;height:13px;"><svg class="a" style="left:1px;top:1px" width="9" height="9"><path d="M1 4.5l2.5 3L8.5 1" fill="none" stroke="#333" stroke-width="1.3"/></svg></div>
<div class="a cell" style="left:101px;top:41px;width:120px;height:23px;"></div>
<div class="a t " style="left:102px;top:45px;"><i class="m">SM</i><i class="d">210628002</i></div>
<div class="a cell" style="left:221px;top:41px;width:150px;height:23px;"></div>
<div class="a t " style="left:222px;top:45px;"><i class="d">2021</i><i class="m">-</i><i class="d">6</i><i class="m">-</i><i class="d">29</i></div>
<div class="a cell" style="left:371px;top:41px;width:120px;height:23px;"></div>
<div class="a t " style="left:372px;top:45px;"><i class="d">1002</i></div>
<div class="a cell" style="left:491px;top:41px;width:150px;height:23px;"></div>
<div class="a t " style="left:492px;top:45px;">小鸭毛</div>
<div class="a cell" style="left:641px;top:41px;width:120px;height:23px;"></div>
<div class="a t " style="left:642px;top:45px;"><i class="d">1012</i></div>
<div class="a cell" style="left:761px;top:41px;width:180px;height:23px;"></div>
<div class="a t " style="left:762px;top:45px;">临沂超润食品有限公司</div>
<div class="a cell" style="left:941px;top:41px;width:100px;height:23px;"></div>
<div class="a t " style="left:942px;top:45px;"><i class="d">0</i><i class="m">.</i><i class="d">0000</i></div>
<div class="a cell" style="left:1041px;top:41px;width:120px;height:23px;"></div>
<div class="a t " style="left:1042px;top:45px;"><i class="d">77500</i><i class="m">.</i><i class="d">0000</i></div>
<div class="a indsel" style="left:0px;top:63px;width:41px;height:24px;"><svg class="a" style="left:4px;top:6px" width="7" height="11"><path d="M0.5 0l6 5.5-6 5.5z" fill="#3a3a3a"/></svg></div>
<div class="a sel" style="left:41px;top:64px;width:1120px;height:23px;border-bottom:1px solid #c9d7ec"></div>
<div class="a cb" style="left:64px;top:68px;width:13px;height:13px;"><svg class="a" style="left:1px;top:1px" width="9" height="9"><path d="M1 4.5l2.5 3L8.5 1" fill="none" stroke="#333" stroke-width="1.3"/></svg></div>
<div class="a t " style="left:102px;top:68px;"><i class="m">SM</i><i class="d">210628006</i></div>
<div class="a t " style="left:222px;top:68px;"><i class="d">2021</i><i class="m">-</i><i class="d">6</i><i class="m">-</i><i class="d">29</i></div>
<div class="a t " style="left:372px;top:68px;"><i class="d">1002</i></div>
<div class="a t " style="left:492px;top:68px;">小鸭毛</div>
<div class="a t " style="left:642px;top:68px;"><i class="d">1011</i></div>
<div class="a t " style="left:762px;top:68px;">山东竹泉村食品有限公司</div>
<div class="a t " style="left:942px;top:68px;"><i class="d">0</i><i class="m">.</i><i class="d">0000</i></div>
<div class="a t " style="left:1042px;top:68px;"><i class="d">80000</i><i class="m">.</i><i class="d">0000</i></div>
<div class="a ind" style="left:0px;top:87px;width:41px;height:23px;"></div>
<div class="a cell" style="left:41px;top:87px;width:60px;height:23px;"></div>
<div class="a cb" style="left:64px;top:91px;width:13px;height:13px;"></div>
<div class="a cell" style="left:101px;top:87px;width:120px;height:23px;"></div>
<div class="a t " style="left:102px;top:91px;"><i class="m">SM</i><i class="d">210628005</i></div>
<div class="a cell" style="left:221px;top:87px;width:150px;height:23px;"></div>
<div class="a t " style="left:222px;top:91px;"><i class="d">2021</i><i class="m">-</i><i class="d">6</i><i class="m">-</i><i class="d">29</i></div>
<div class="a cell" style="left:371px;top:87px;width:120px;height:23px;"></div>
<div class="a t " style="left:372px;top:91px;"><i class="d">1002</i></div>
<div class="a cell" style="left:491px;top:87px;width:150px;height:23px;"></div>
<div class="a t " style="left:492px;top:91px;">小鸭毛</div>
<div class="a cell" style="left:641px;top:87px;width:120px;height:23px;"></div>
<div class="a t " style="left:642px;top:91px;"><i class="d">1007</i></div>
<div class="a cell" style="left:761px;top:87px;width:180px;height:23px;"></div>
<div class="a t " style="left:762px;top:91px;">临沂市万香斋食品有限公司</div>
<div class="a cell" style="left:941px;top:87px;width:100px;height:23px;"></div>
<div class="a t " style="left:942px;top:91px;"><i class="d">0</i><i class="m">.</i><i class="d">0000</i></div>
<div class="a cell" style="left:1041px;top:87px;width:120px;height:23px;"></div>
<div class="a t " style="left:1042px;top:91px;"><i class="d">84000</i><i class="m">.</i><i class="d">0000</i></div>
<div class="a ind" style="left:0px;top:110px;width:41px;height:23px;"></div>
<div class="a cell" style="left:41px;top:110px;width:60px;height:23px;"></div>
<div class="a cb" style="left:64px;top:114px;width:13px;height:13px;"></div>
<div class="a cell" style="left:101px;top:110px;width:120px;height:23px;"></div>
<div class="a t " style="left:102px;top:114px;"><i class="m">SM</i><i class="d">210629002</i></div>
<div class="a cell" style="left:221px;top:110px;width:150px;height:23px;"></div>
<div class="a t " style="left:222px;top:114px;"><i class="d">2021</i><i class="m">-</i><i class="d">6</i><i class="m">-</i><i class="d">29</i></div>
<div class="a cell" style="left:371px;top:110px;width:120px;height:23px;"></div>
<div class="a t " style="left:372px;top:114px;"><i class="d">1002</i></div>
<div class="a cell" style="left:491px;top:110px;width:150px;height:23px;"></div>
<div class="a t " style="left:492px;top:114px;">小鸭毛</div>
<div class="a cell" style="left:641px;top:110px;width:120px;height:23px;"></div>
<div class="a t " style="left:642px;top:114px;"><i class="d">1003</i></div>
<div class="a cell" style="left:761px;top:110px;width:180px;height:23px;"></div>
<div class="a t " style="left:762px;top:114px;">临沂新航食品有限公司</div>
<div class="a cell" style="left:941px;top:110px;width:100px;height:23px;"></div>
<div class="a t " style="left:942px;top:114px;"><i class="d">0</i><i class="m">.</i><i class="d">0000</i></div>
<div class="a cell" style="left:1041px;top:110px;width:120px;height:23px;"></div>
<div class="a t " style="left:1042px;top:114px;"><i class="d">80000</i><i class="m">.</i><i class="d">0000</i></div>
<div class="a ind" style="left:0px;top:133px;width:41px;height:23px;"></div>
<div class="a cell" style="left:41px;top:133px;width:60px;height:23px;"></div>
<div class="a cb" style="left:64px;top:137px;width:13px;height:13px;"></div>
<div class="a cell" style="left:101px;top:133px;width:120px;height:23px;"></div>
<div class="a t " style="left:102px;top:137px;"><i class="m">SM</i><i class="d">210628007</i></div>
<div class="a cell" style="left:221px;top:133px;width:150px;height:23px;"></div>
<div class="a t " style="left:222px;top:137px;"><i class="d">2021</i><i class="m">-</i><i class="d">6</i><i class="m">-</i><i class="d">29</i></div>
<div class="a cell" style="left:371px;top:133px;width:120px;height:23px;"></div>
<div class="a t " style="left:372px;top:137px;"><i class="d">1002</i></div>
<div class="a cell" style="left:491px;top:133px;width:150px;height:23px;"></div>
<div class="a t " style="left:492px;top:137px;">小鸭毛</div>
<div class="a cell" style="left:641px;top:133px;width:120px;height:23px;"></div>
<div class="a t " style="left:642px;top:137px;"><i class="d">1004</i></div>
<div class="a cell" style="left:761px;top:133px;width:180px;height:23px;"></div>
<div class="a t " style="left:762px;top:137px;">沂南县永鑫食品有限公司</div>
<div class="a cell" style="left:941px;top:133px;width:100px;height:23px;"></div>
<div class="a t " style="left:942px;top:137px;"><i class="d">0</i><i class="m">.</i><i class="d">0000</i></div>
<div class="a cell" style="left:1041px;top:133px;width:120px;height:23px;"></div>
<div class="a t " style="left:1042px;top:137px;"><i class="d">90000</i><i class="m">.</i><i class="d">0000</i></div>
<div class="a ind" style="left:0px;top:156px;width:41px;height:23px;"></div>
<div class="a cell" style="left:41px;top:156px;width:60px;height:23px;"></div>
<div class="a cb" style="left:64px;top:160px;width:13px;height:13px;"></div>
<div class="a cell" style="left:101px;top:156px;width:120px;height:23px;"></div>
<div class="a t " style="left:102px;top:160px;"><i class="m">SM</i><i class="d">210628010</i></div>
<div class="a cell" style="left:221px;top:156px;width:150px;height:23px;"></div>
<div class="a t " style="left:222px;top:160px;"><i class="d">2021</i><i class="m">-</i><i class="d">6</i><i class="m">-</i><i class="d">29</i></div>
<div class="a cell" style="left:371px;top:156px;width:120px;height:23px;"></div>
<div class="a t " style="left:372px;top:160px;"><i class="d">1002</i></div>
<div class="a cell" style="left:491px;top:156px;width:150px;height:23px;"></div>
<div class="a t " style="left:492px;top:160px;">小鸭毛</div>
<div class="a cell" style="left:641px;top:156px;width:120px;height:23px;"></div>
<div class="a t " style="left:642px;top:160px;"><i class="d">1015</i></div>
<div class="a cell" style="left:761px;top:156px;width:180px;height:23px;"></div>
<div class="a t " style="left:762px;top:160px;">沂南县昌发食品有限公司</div>
<div class="a cell" style="left:941px;top:156px;width:100px;height:23px;"></div>
<div class="a t " style="left:942px;top:160px;"><i class="d">0</i><i class="m">.</i><i class="d">0000</i></div>
<div class="a cell" style="left:1041px;top:156px;width:120px;height:23px;"></div>
<div class="a t " style="left:1042px;top:160px;"><i class="d">87000</i><i class="m">.</i><i class="d">0000</i></div>
<div class="a ind" style="left:0px;top:179px;width:41px;height:23px;"></div>
<div class="a cell" style="left:41px;top:179px;width:60px;height:23px;"></div>
<div class="a cb" style="left:64px;top:183px;width:13px;height:13px;"></div>
<div class="a cell" style="left:101px;top:179px;width:120px;height:23px;"></div>
<div class="a t " style="left:102px;top:183px;"><i class="m">SM</i><i class="d">210628009</i></div>
<div class="a cell" style="left:221px;top:179px;width:150px;height:23px;"></div>
<div class="a t " style="left:222px;top:183px;"><i class="d">2021</i><i class="m">-</i><i class="d">6</i><i class="m">-</i><i class="d">29</i></div>
<div class="a cell" style="left:371px;top:179px;width:120px;height:23px;"></div>
<div class="a t " style="left:372px;top:183px;"><i class="d">1002</i></div>
<div class="a cell" style="left:491px;top:179px;width:150px;height:23px;"></div>
<div class="a t " style="left:492px;top:183px;">小鸭毛</div>
<div class="a cell" style="left:641px;top:179px;width:120px;height:23px;"></div>
<div class="a t " style="left:642px;top:183px;"><i class="d">1005</i></div>
<div class="a cell" style="left:761px;top:179px;width:180px;height:23px;"></div>
<div class="a t " style="left:762px;top:183px;">山东真诚食品有限公司</div>
<div class="a cell" style="left:941px;top:179px;width:100px;height:23px;"></div>
<div class="a t " style="left:942px;top:183px;"><i class="d">0</i><i class="m">.</i><i class="d">0000</i></div>
<div class="a cell" style="left:1041px;top:179px;width:120px;height:23px;"></div>
<div class="a t " style="left:1042px;top:183px;"><i class="d">79000</i><i class="m">.</i><i class="d">0000</i></div>
<div class="a ind" style="left:0px;top:202px;width:41px;height:23px;"></div>
<div class="a cell" style="left:41px;top:202px;width:60px;height:23px;"></div>
<div class="a cb" style="left:64px;top:206px;width:13px;height:13px;"></div>
<div class="a cell" style="left:101px;top:202px;width:120px;height:23px;"></div>
<div class="a t " style="left:102px;top:206px;"><i class="m">SM</i><i class="d">210628008</i></div>
<div class="a cell" style="left:221px;top:202px;width:150px;height:23px;"></div>
<div class="a t " style="left:222px;top:206px;"><i class="d">2021</i><i class="m">-</i><i class="d">6</i><i class="m">-</i><i class="d">29</i></div>
<div class="a cell" style="left:371px;top:202px;width:120px;height:23px;"></div>
<div class="a t " style="left:372px;top:206px;"><i class="d">1002</i></div>
<div class="a cell" style="left:491px;top:202px;width:150px;height:23px;"></div>
<div class="a t " style="left:492px;top:206px;">小鸭毛</div>
<div class="a cell" style="left:641px;top:202px;width:120px;height:23px;"></div>
<div class="a t " style="left:642px;top:206px;"><i class="d">1010</i></div>
<div class="a cell" style="left:761px;top:202px;width:180px;height:23px;"></div>
<div class="a t " style="left:762px;top:206px;">沂南县玉诚食品有限公司</div>
<div class="a cell" style="left:941px;top:202px;width:100px;height:23px;"></div>
<div class="a t " style="left:942px;top:206px;"><i class="d">0</i><i class="m">.</i><i class="d">0000</i></div>
<div class="a cell" style="left:1041px;top:202px;width:120px;height:23px;"></div>
<div class="a t " style="left:1042px;top:206px;"><i class="d">88000</i><i class="m">.</i><i class="d">0000</i></div>
</div>
<div class="a " style="left:1491px;top:374px;width:17px;height:220px;background:linear-gradient(90deg,#a3bbe1 0,#8fabd7 35%,#809dcb 100%)"></div>
<div class="a " style="left:1491px;top:374px;width:17px;height:17px;"><svg class="a" style="left:4px;top:5px" width="9" height="6"><path d="M0 5.5l4.5-5 4.5 5z" fill="#4a5b8c"/></svg></div>
<div class="a " style="left:1491px;top:391px;width:17px;height:16px;border:1px solid #5f7eb6;border-radius:2px;background:linear-gradient(90deg,#f6f8fc 0,#e3e9f3 45%,#cdd7e8 60%,#eef2f9 100%)"><div class="a" style="left:3px;top:4px;width:9px;height:7px;background:repeating-linear-gradient(#858c9a 0 1px,transparent 1px 2px)"></div></div>
<div class="a " style="left:1491px;top:577px;width:17px;height:17px;"><svg class="a" style="left:4px;top:6px" width="9" height="6"><path d="M0 0l4.5 5 4.5-5z" fill="#4a5b8c"/></svg></div>
<div class="a btn" style="left:792px;top:597px;width:56px;height:49px;"></div>
<svg class="a" style="left:803px;top:604px" width="34" height="34" viewBox="0 0 34 34"><path d="M17 5.5v20M6.2 16.8l10.8 10.8 10.8-10.8" fill="none" stroke="#17418d" stroke-width="7" stroke-linecap="round" stroke-linejoin="round"/></svg>
<div class="a " style="left:152px;top:647px;width:796px;height:219px;background:#ababab;border:1px solid #000"></div>
<div class="a indh" style="left:153px;top:648px;width:41px;height:18px;"><svg class="a" style="right:2px;bottom:2px" width="9" height="9"><path d="M9 0v9h-9z" fill="#e9eef6"/></svg></div>
<div class="a hdo" style="left:194px;top:648px;width:70px;height:18px;"></div>
<div class="a t " style="left:199px;top:650px;">选择</div>
<div class="a hd" style="left:264px;top:648px;width:120px;height:18px;"></div>
<div class="a t " style="left:269px;top:650px;">采购订单号</div>
<div class="a hd" style="left:384px;top:648px;width:150px;height:18px;"></div>
<div class="a t " style="left:389px;top:650px;">物料名称</div>
<div class="a hd" style="left:534px;top:648px;width:100px;height:18px;"></div>
<div class="a t " style="left:539px;top:650px;">生产日期</div>
<div class="a hd" style="left:634px;top:648px;width:100px;height:18px;"></div>
<div class="a t " style="left:639px;top:650px;">供应商名称</div>
<div class="a hd" style="left:734px;top:648px;width:100px;height:18px;"></div>
<div class="a t " style="left:739px;top:650px;">重量</div>
<div class="a hd" style="left:834px;top:648px;width:100px;height:18px;"></div>
<div class="a t " style="left:839px;top:650px;">鸭子只数</div>
<div class="a indsel" style="left:153px;top:665px;width:41px;height:24px;"><svg class="a" style="left:4px;top:6px" width="7" height="11"><path d="M0.5 0l6 5.5-6 5.5z" fill="#3a3a3a"/></svg></div>
<div class="a sel" style="left:194px;top:666px;width:740px;height:23px;border-bottom:1px solid #c9d7ec"></div>
<div class="a cb" style="left:222px;top:670px;width:13px;height:13px;"></div>
<div class="a t " style="left:265px;top:670px;"><i class="m">SM</i><i class="d">210628012</i></div>
<div class="a t " style="left:385px;top:670px;">小鸭毛</div>
<div class="a t " style="left:535px;top:670px;"><i class="d">2021</i><i class="m">-</i><i class="d">6</i><i class="m">-</i><i class="d">29</i></div>
<div class="a t " style="left:635px;top:670px;">临沂龙兴农牧<i class="m">...</i></div>
<div class="a t " style="left:735px;top:670px;"><i class="d">0</i><i class="m">.</i><i class="d">0000</i></div>
<div class="a t " style="left:835px;top:670px;"><i class="d">80000</i><i class="m">.</i><i class="d">0000</i></div>
<div class="a ind" style="left:153px;top:689px;width:41px;height:23px;"></div>
<div class="a cell" style="left:194px;top:689px;width:70px;height:23px;"></div>
<div class="a cb" style="left:222px;top:693px;width:13px;height:13px;"></div>
<div class="a cell" style="left:264px;top:689px;width:120px;height:23px;"></div>
<div class="a t " style="left:265px;top:693px;"><i class="m">SM</i><i class="d">210628002</i></div>
<div class="a cell" style="left:384px;top:689px;width:150px;height:23px;"></div>
<div class="a t " style="left:385px;top:693px;">小鸭毛</div>
<div class="a cell" style="left:534px;top:689px;width:100px;height:23px;"></div>
<div class="a t " style="left:535px;top:693px;"><i class="d">2021</i><i class="m">-</i><i class="d">6</i><i class="m">-</i><i class="d">29</i></div>
<div class="a cell" style="left:634px;top:689px;width:100px;height:23px;"></div>
<div class="a t " style="left:635px;top:693px;">临沂超润食品<i class="m">...</i></div>
<div class="a cell" style="left:734px;top:689px;width:100px;height:23px;"></div>
<div class="a t " style="left:735px;top:693px;"><i class="d">0</i><i class="m">.</i><i class="d">0000</i></div>
<div class="a cell" style="left:834px;top:689px;width:100px;height:23px;"></div>
<div class="a t " style="left:835px;top:693px;"><i class="d">77500</i><i class="m">.</i><i class="d">0000</i></div>
<div class="a ind" style="left:153px;top:712px;width:41px;height:23px;"></div>
<div class="a cell" style="left:194px;top:712px;width:70px;height:23px;"></div>
<div class="a cb" style="left:222px;top:716px;width:13px;height:13px;"></div>
<div class="a cell" style="left:264px;top:712px;width:120px;height:23px;"></div>
<div class="a t " style="left:265px;top:716px;"><i class="m">SM</i><i class="d">210628006</i></div>
<div class="a cell" style="left:384px;top:712px;width:150px;height:23px;"></div>
<div class="a t " style="left:385px;top:716px;">小鸭毛</div>
<div class="a cell" style="left:534px;top:712px;width:100px;height:23px;"></div>
<div class="a t " style="left:535px;top:716px;"><i class="d">2021</i><i class="m">-</i><i class="d">6</i><i class="m">-</i><i class="d">29</i></div>
<div class="a cell" style="left:634px;top:712px;width:100px;height:23px;"></div>
<div class="a t " style="left:635px;top:716px;">山东竹泉村食<i class="m">...</i></div>
<div class="a cell" style="left:734px;top:712px;width:100px;height:23px;"></div>
<div class="a t " style="left:735px;top:716px;"><i class="d">0</i><i class="m">.</i><i class="d">0000</i></div>
<div class="a cell" style="left:834px;top:712px;width:100px;height:23px;"></div>
<div class="a t " style="left:835px;top:716px;"><i class="d">80000</i><i class="m">.</i><i class="d">0000</i></div>
<div class="a btn" style="left:963px;top:658px;width:86px;height:23px;"></div>
<svg class="a" style="left:984px;top:661px" width="14" height="16" viewBox="0 0 14 16"><path d="M2 5.5h10l-.8 9.5h-8.4z" fill="#3f7db9"/><path d="M1 3.6h12M5 3.4V1.6h4v1.8" stroke="#3f7db9" stroke-width="1.6" fill="none"/><path d="M5 7v6.5M7 7v6.5M9 7v6.5" stroke="#cfe0f7" stroke-width=".9"/></svg>
<div class="a t lb" style="left:1004px;top:661px;">删除</div>
<div class="a hatch" style="left:112px;top:874px;width:1451px;height:48px;border-top:2px solid #7c7c7c;border-left:1px solid #8a8a8a;border-right:1px solid #fff"></div>
<div class="a " style="left:113px;top:876px;width:1px;height:46px;background:#777"></div>
<div class="a btn" style="left:719px;top:887px;width:86px;height:23px;"></div>
<svg class="a" style="left:740px;top:892px" width="16" height="14" viewBox="0 0 16 14"><path d="M2 6.5l4 4 8-8" fill="none" stroke="#3f7db9" stroke-width="3.2"/></svg>
<div class="a t lb" style="left:763px;top:890px;">确定</div>
<div class="a btn" style="left:813px;top:887px;width:81px;height:23px;"></div>
<svg class="a" style="left:831px;top:890px" width="16" height="16" viewBox="0 0 16 16"><path d="M4 4A6 6 0 1 1 3 11" fill="none" stroke="#3f7db9" stroke-width="2"/><path d="M1 1v6h6z" fill="#3f7db9"/></svg>
<div class="a t lb" style="left:853px;top:890px;">取消</div>
</body></html>
